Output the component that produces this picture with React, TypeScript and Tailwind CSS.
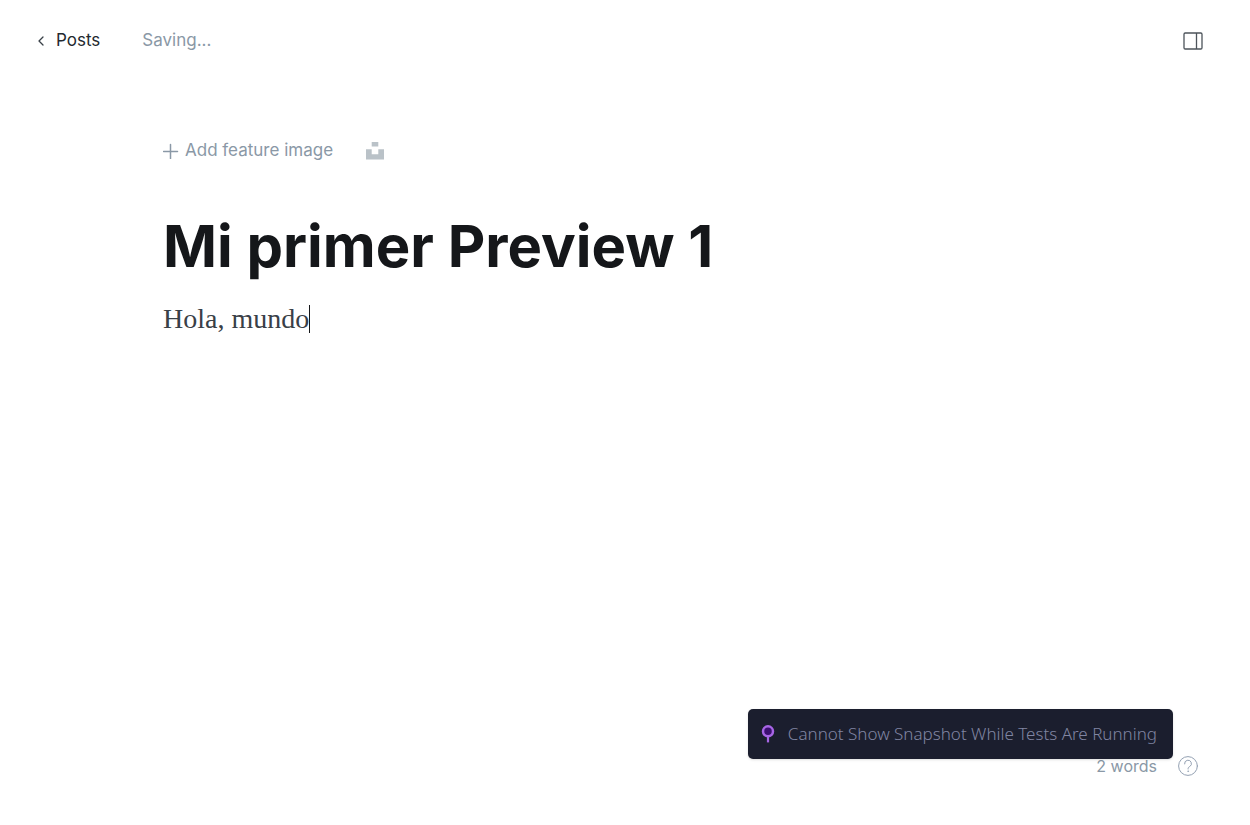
import React from "react";

function BackIcon() {
  return (
    <svg viewBox="0 0 8 12" className="h-3 w-2" fill="none" stroke="#394047" strokeWidth="1.3" strokeLinecap="round" strokeLinejoin="round" aria-hidden="true">
      <path d="M7 2 3 6l4 4" />
    </svg>
  );
}

function SidebarIcon() {
  return (
    <svg viewBox="0 0 20 18" className="h-[18px] w-5" fill="none" stroke="#4d545b" strokeWidth="1.3" aria-hidden="true">
      <rect x="1" y="1" width="18" height="16" rx="1.2" />
      <path d="M13.5 1v16" />
    </svg>
  );
}

function PlusIcon() {
  return (
    <svg viewBox="0 0 16 16" className="size-4" fill="none" stroke="#8a98a6" strokeWidth="1.5" strokeLinecap="round" aria-hidden="true">
      <path d="M7.5 1.5v14M.5 8.5h14" />
    </svg>
  );
}

function UnsplashIcon() {
  return (
    <svg viewBox="0 0 18 18" className="size-[18px]" fill="#bac2c8" aria-hidden="true">
      <path d="M5.7 0h6.6v4.5H5.7zM12.3 7.3H18V17.5H0V7.3h5.7v5h6.6z" />
    </svg>
  );
}

function PinIcon() {
  return (
    <svg viewBox="0 0 14 20" className="h-5 w-3.5" fill="none" stroke="#a765e5" strokeWidth="2.5" aria-hidden="true">
      <path d="M7 12v6.4" strokeWidth="2.2" />
      <circle cx="7" cy="7.3" r="5" fill="#3c0f70" />
    </svg>
  );
}

function HelpIcon() {
  return (
    <svg viewBox="0 0 20 20" className="size-5" fill="none" stroke="#93a0b2" strokeWidth="1" strokeLinecap="round" aria-hidden="true">
      <circle cx="10" cy="10" r="9.4" />
      <path d="M6.6 7.9a3.4 3.4 0 1 1 5.2 2.6c-1 .6-1.7 1-1.7 2.2v.3" />
      <circle cx="10.1" cy="15.2" r=".5" fill="#93a0b2" strokeWidth=".5" />
    </svg>
  );
}

export default function App() {
  return (
    <div className="flex min-h-screen flex-col bg-white font-['Inter',sans-serif] text-base text-[#8a98a6]">
      <header className="flex h-[82px] items-center justify-between pr-[47px] pl-9 text-[17px]">
        <div className="flex items-center gap-[42px]">
          <a href="#posts" className="flex items-center gap-3 text-[#23292f]">
            <BackIcon />
            <span>Posts</span>
          </a>
          <span role="status">Saving...</span>
        </div>
        <button type="button" aria-label="Settings">
          <SidebarIcon />
        </button>
      </header>

      <main className="mx-auto flex w-full max-w-[924px] grow flex-col pt-[53px]">
        <div className="flex h-8 items-center gap-[33px] text-[17px]">
          <button type="button" className="flex items-center gap-1.5">
            <PlusIcon />
            <span>Add feature image</span>
          </button>
          <button type="button" aria-label="Select image from Unsplash">
            <UnsplashIcon />
          </button>
        </div>
        <input
          type="text"
          aria-label="Post title"
          defaultValue="Mi primer Preview 1"
          className="mt-11 h-[70px] w-full font-bold text-[58px] text-[#15171a] outline-none"
        />
        <div
          role="textbox"
          aria-label="Post body"
          contentEditable
          suppressContentEditableWarning
          className="mt-5 grow font-['Liberation_Serif',serif] text-[28px] leading-9 text-[#394047] outline-none"
        >
          <p className="flex items-center">
            Hola, mundo
            <span className="h-7 w-px bg-[#15171a]" />
          </p>
        </div>
      </main>

      <footer className="relative flex h-[118px] items-center justify-end gap-[21px] px-[52px]">
        <span>2 words</span>
        <a href="#help" aria-label="Help">
          <HelpIcon />
        </a>
        <div
          role="alert"
          className="absolute top-0.5 right-[77px] flex h-[50px] items-center gap-[13px] rounded-[5px] bg-[#1b1e2e] pr-4 pl-[13px] font-['Noto_Sans',sans-serif] text-[17px] font-light whitespace-nowrap text-[#8085a2] shadow-sm"
        >
          <PinIcon />
          <span>Cannot Show Snapshot While Tests Are Running</span>
        </div>
      </footer>
    </div>
  );
}
